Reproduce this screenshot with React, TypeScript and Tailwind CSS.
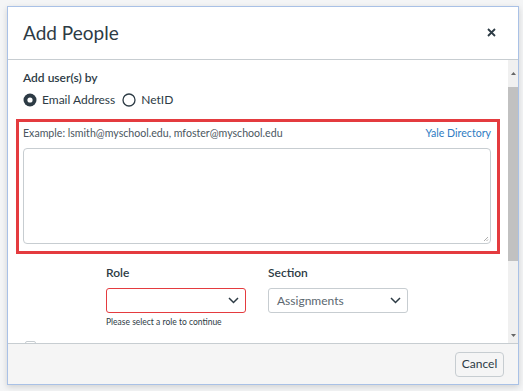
import React from "react";

const Chevron = () => (
  <svg width="11" height="7" viewBox="0 0 11 7" fill="none">
    <path d="M1 1l4.5 4.5L10 1" stroke="#2d3b45" strokeWidth="1.5" />
  </svg>
);

export default function App() {
  return (
    <div
      className="w-[523px] h-[391px] bg-[#f4f5f6] overflow-hidden pt-[6px] pl-[7px]"
      style={{ fontFamily: "Lato, 'Noto Sans', sans-serif" }}
    >
      <div className="w-[512px] h-[379px] border border-[#a9c1e6] bg-white flex flex-col shadow-[0_2px_6px_rgba(0,0,0,0.15)]">
        {/* header */}
        <div className="h-[53px] shrink-0 border-b border-[#c7cdd1] flex items-center justify-between pl-[15px] pr-[22px] pb-[2px]">
          <div className="text-[19px] text-[#2d3b45] leading-none">Add People</div>
          <svg width="9" height="9" viewBox="0 0 9 9">
            <path d="M1 1l7 7M8 1l-7 7" stroke="#2d3b45" strokeWidth="1.8" />
          </svg>
        </div>
        {/* body */}
        <div className="flex-1 flex min-h-0">
          <div className="flex-1 overflow-hidden pl-[8px] relative">
            <div className="pl-[7px] pt-[10px] text-[12px] font-semibold text-[#2d3b45] leading-[16px]">
              Add user(s) by
            </div>
            <div className="pl-[7px] mt-[6px] flex items-center h-[16px] text-[12px] text-[#2d3b45]">
              <svg width="14" height="14" viewBox="0 0 14 14">
                <circle cx="7" cy="7" r="6.5" fill="#2d3b45" />
                <circle cx="7" cy="7" r="2.6" fill="#fff" />
              </svg>
              <span className="ml-[5px]">Email Address</span>
              <svg width="14" height="14" viewBox="0 0 14 14" className="ml-[7px]">
                <circle cx="7" cy="7" r="6" fill="#fff" stroke="#2d3b45" strokeWidth="1.3" />
              </svg>
              <span className="ml-[5px]">NetID</span>
            </div>
            <div className="mt-[11px] w-[484px] h-[135px] border-[3px] border-[#e43b3f] pl-[4px] pr-[6px] pt-[3px]">
              <div className="flex justify-between items-center text-[10.6px] leading-[16px]">
                <span className="text-[#4a5660]">Example: lsmith@myschool.edu, mfoster@myschool.edu</span>
                <span className="text-[#2e7bc2]">Yale Directory</span>
              </div>
              <div className="mt-[7px] h-[96px] border border-[#c7cdd1] rounded-[4px] relative">
                <svg width="6" height="6" viewBox="0 0 6 6" className="absolute right-[1px] bottom-[1px]">
                  <path d="M5 1L1 5M5 3.5L3.5 5" stroke="#999" strokeWidth="0.8" />
                </svg>
              </div>
            </div>
            <div className="flex mt-[11px] pl-[90px] gap-[22px]">
              <div className="w-[140px]">
                <div className="text-[12px] font-semibold text-[#2d3b45] leading-[16px]">Role</div>
                <div className="mt-[7px] h-[25px] border border-[#e43b3f] rounded-[3px] flex items-center justify-end pr-[6px]">
                  <Chevron />
                </div>
                <div className="mt-[3px] text-[8.5px] text-[#2d3b45] leading-[12px]">Please select a role to continue</div>
              </div>
              <div className="w-[140px]">
                <div className="text-[12px] font-semibold text-[#2d3b45] leading-[16px]">Section</div>
                <div className="mt-[7px] h-[25px] border border-[#c7cdd1] rounded-[3px] flex items-center justify-between pl-[8px] pr-[6px]">
                  <span className="text-[12px] text-[#5b6770]">Assignments</span>
                  <Chevron />
                </div>
              </div>
            </div>
            <div className="absolute left-[17px] bottom-[-6px] w-[11px] h-[8px] rounded-[2px] border border-[#c7cdd1]" />
          </div>
          {/* scrollbar */}
          <div className="w-[10px] bg-[#f0f0f0] flex flex-col items-center">
            <div className="h-[27px] w-full flex justify-center pt-[12px]">
              <svg width="5" height="3" viewBox="0 0 5 3"><path d="M0 3L2.5 0L5 3z" fill="#666" /></svg>
            </div>
            <div className="w-full h-[174px] bg-[#c1c1c1]" />
            <div className="flex-1" />
            <div className="h-[10px] w-full flex justify-center pt-[1px]">
              <svg width="5" height="3" viewBox="0 0 5 3"><path d="M0 0L2.5 3L5 0z" fill="#666" /></svg>
            </div>
          </div>
        </div>
        {/* footer */}
        <div className="h-[41px] shrink-0 border-t border-[#c7cdd1] bg-[#f5f5f5] flex items-center justify-end pr-[14px]">
          <div className="h-[25px] w-[49px] border border-[#c7cdd1] rounded-[4px] bg-[#f5f5f5] flex items-center justify-center text-[12px] text-[#2d3b45]">
            Cancel
          </div>
        </div>
      </div>
    </div>
  );
}
